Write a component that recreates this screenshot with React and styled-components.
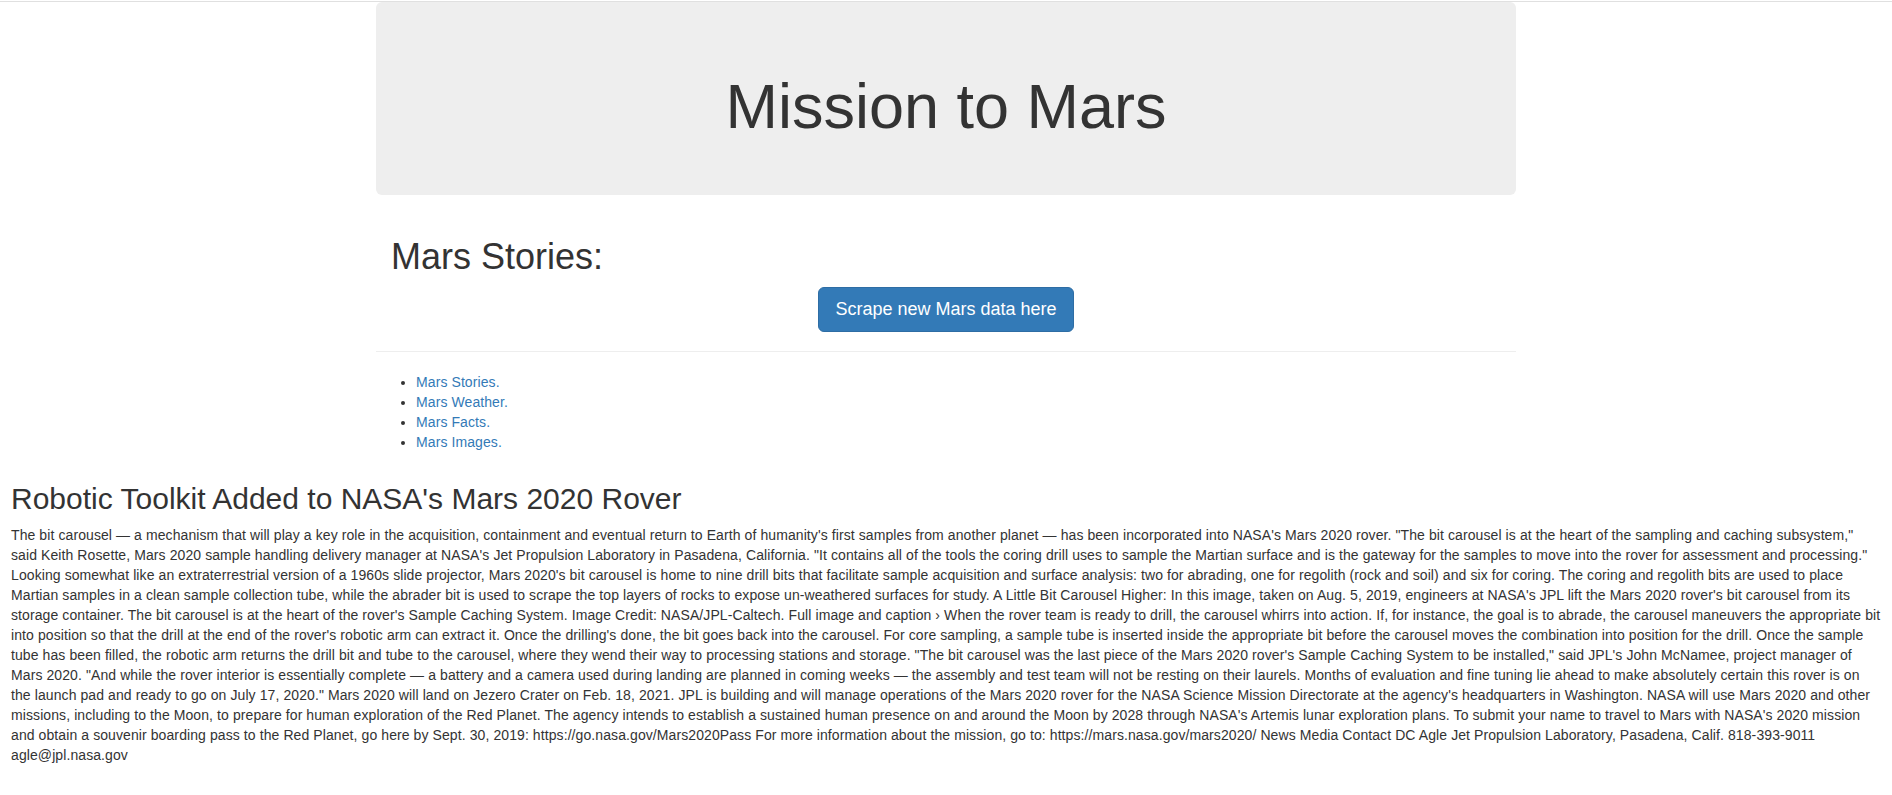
import React from 'react'
import styled, { createGlobalStyle } from 'styled-components'

const GlobalStyle = createGlobalStyle`
  html, body {
    margin: 0;
    padding: 0;
    background: #fff;
  }
  body {
    font-family: "Liberation Sans", Arial, Helvetica, sans-serif;
    font-size: 14px;
    line-height: 1.42857143;
    color: #333;
  }
  * {
    box-sizing: border-box;
  }
`

const TopRule = styled.div`
  margin-top: 1px;
  height: 1px;
  background-color: #e0e0e0;
`

const Container = styled.div`
  width: 1140px;
  margin: 0 auto;
  display: flow-root;
`

const Jumbotron = styled.div`
  background-color: #eee;
  border-radius: 6px;
  padding: 50px 60px 44px;
  margin-bottom: 22px;
  text-align: center;
`

const Title = styled.h1`
  font-size: 63px;
  font-weight: 500;
  line-height: 1.1;
  margin: 20px 0 10px;
`

const Column = styled.div`
  padding: 0 15px;
  display: flow-root;
`

const SectionTitle = styled.h1`
  font-size: 36px;
  font-weight: 500;
  line-height: 1.1;
  margin: 20px 0 10px;
`

const ButtonRow = styled.div`
  display: flex;
  justify-content: center;
`

const ScrapeButton = styled.a`
  display: inline-block;
  padding: 10px 16px;
  font-size: 18px;
  line-height: 23px;
  color: #fff;
  background-color: #337ab7;
  border: 1px solid #2e6da4;
  border-radius: 6px;
  text-decoration: none;
  cursor: pointer;
`

const Divider = styled.hr`
  margin: 19px 0 20px;
  border: 0;
  border-top: 1px solid #eee;
  height: 0;
`

const NavList = styled.ul`
  margin: 0 0 10px;
  padding-left: 40px;
  letter-spacing: 0.09px;
`

const NavLink = styled.a`
  color: #337ab7;
  text-decoration: none;
`

const Article = styled.div`
  padding: 0 10px 0 11px;
`

const ArticleTitle = styled.h2`
  font-size: 30px;
  font-weight: 500;
  line-height: 1.1;
  margin: 20px 0 10px;
`

const ArticleBody = styled.p`
  margin: 0 0 10px;
  letter-spacing: 0.09px;
`

const links = ['Mars Stories.', 'Mars Weather.', 'Mars Facts.', 'Mars Images.']

const story = `The bit carousel — a mechanism that will play a key role in the acquisition, containment and eventual return to Earth of humanity's first samples from another planet — has been incorporated into NASA's Mars 2020 rover. "The bit carousel is at the heart of the sampling and caching subsystem," said Keith Rosette, Mars 2020 sample handling delivery manager at NASA's Jet Propulsion Laboratory in Pasadena, California. "It contains all of the tools the coring drill uses to sample the Martian surface and is the gateway for the samples to move into the rover for assessment and processing." Looking somewhat like an extraterrestrial version of a 1960s slide projector, Mars 2020's bit carousel is home to nine drill bits that facilitate sample acquisition and surface analysis: two for abrading, one for regolith (rock and soil) and six for coring. The coring and regolith bits are used to place Martian samples in a clean sample collection tube, while the abrader bit is used to scrape the top layers of rocks to expose un-weathered surfaces for study. A Little Bit Carousel Higher: In this image, taken on Aug. 5, 2019, engineers at NASA's JPL lift the Mars 2020 rover's bit carousel from its storage container. The bit carousel is at the heart of the rover's Sample Caching System. Image Credit: NASA/JPL-Caltech. Full image and caption › When the rover team is ready to drill, the carousel whirrs into action. If, for instance, the goal is to abrade, the carousel maneuvers the appropriate bit into position so that the drill at the end of the rover's robotic arm can extract it. Once the drilling's done, the bit goes back into the carousel. For core sampling, a sample tube is inserted inside the appropriate bit before the carousel moves the combination into position for the drill. Once the sample tube has been filled, the robotic arm returns the drill bit and tube to the carousel, where they wend their way to processing stations and storage. "The bit carousel was the last piece of the Mars 2020 rover's Sample Caching System to be installed," said JPL's John McNamee, project manager of Mars 2020. "And while the rover interior is essentially complete — a battery and a camera used during landing are planned in coming weeks — the assembly and test team will not be resting on their laurels. Months of evaluation and fine tuning lie ahead to make absolutely certain this rover is on the launch pad and ready to go on July 17, 2020." Mars 2020 will land on Jezero Crater on Feb. 18, 2021. JPL is building and will manage operations of the Mars 2020 rover for the NASA Science Mission Directorate at the agency's headquarters in Washington. NASA will use Mars 2020 and other missions, including to the Moon, to prepare for human exploration of the Red Planet. The agency intends to establish a sustained human presence on and around the Moon by 2028 through NASA's Artemis lunar exploration plans. To submit your name to travel to Mars with NASA's 2020 mission and obtain a souvenir boarding pass to the Red Planet, go here by Sept. 30, 2019: https://go.nasa.gov/Mars2020Pass For more information about the mission, go to: https://mars.nasa.gov/mars2020/ News Media Contact DC Agle Jet Propulsion Laboratory, Pasadena, Calif. 818-393-9011 agle@jpl.nasa.gov`

const App = () => {
  return (
    <>
      <GlobalStyle />
      <TopRule />
      <Container>
        <Jumbotron>
          <Title>Mission to Mars</Title>
        </Jumbotron>
        <Column>
          <SectionTitle>Mars Stories:</SectionTitle>
          <ButtonRow>
            <ScrapeButton href="#">Scrape new Mars data here</ScrapeButton>
          </ButtonRow>
        </Column>
        <Divider />
        <NavList>
          {links.map((label) => (
            <li key={label}>
              <NavLink href="#">{label}</NavLink>
            </li>
          ))}
        </NavList>
      </Container>
      <Article>
        <ArticleTitle>Robotic Toolkit Added to NASA's Mars 2020 Rover</ArticleTitle>
        <ArticleBody>{story}</ArticleBody>
      </Article>
    </>
  )
}

export default App
